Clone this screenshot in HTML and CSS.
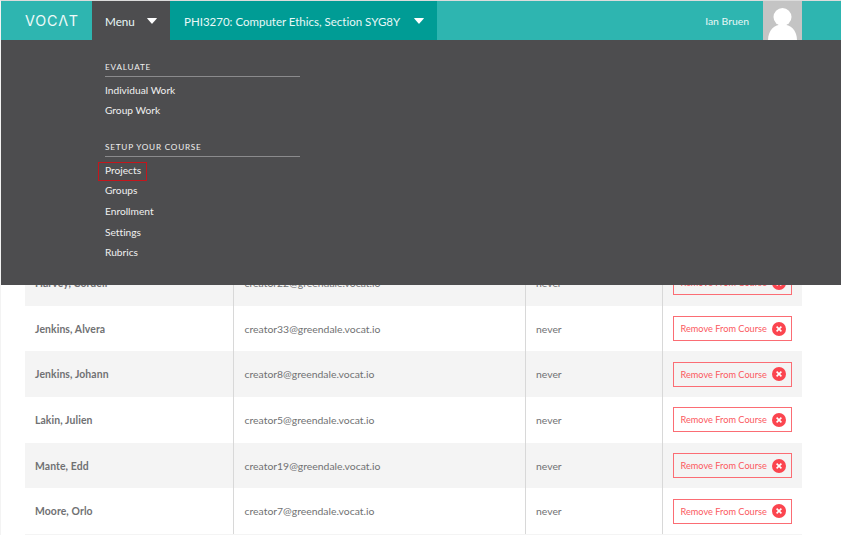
FILE: index.html
```html
<!DOCTYPE html>
<html lang="en">
<head>
<meta charset="utf-8">
<title>Vocat</title>
<link rel="stylesheet" href="styles.css">
</head>
<body>
<svg class="sprite" aria-hidden="true">
  <symbol id="remove" viewBox="0 0 14 14"><circle cx="7" cy="7" r="7" fill="#fb454f"/><path d="M4.6 4.6l4.800 4.800M9.400 4.600L4.600 9.400" stroke="#fff" stroke-width="1.6"/></symbol>
  <symbol id="caret" viewBox="0 0 10 6"><path d="M.3 0h9.4q.3 0 .1.4L5.4 5.6q-.4.4-.8 0L.2.4Q0 0 .3 0z" fill="#fff"/></symbol>
</svg>
<div class="page">
  <header class="topbar">
    <div class="logo">VOCΛT</div>
    <div class="menu-toggle"><span>Menu</span><svg class="caret"><use href="#caret"/></svg></div>
    <div class="course"><span>PHI3270: Computer Ethics, Section SYG8Y</span><svg class="caret"><use href="#caret"/></svg></div>
    <div class="user">Ian Bruen</div>
    <svg class="avatar" viewBox="0 0 39 39"><path d="M0 0h39v39H0z" fill="#c4c4c4"/><circle cx="19.5" cy="16" r="9" fill="#fff"/><path d="M5 39.5c0-10 6-16 14.500-16S34 29.500 34 39.500z" fill="#fff"/></svg>
  </header>
  <nav class="dropdown">
    <section class="group">
      <h2>EVALUATE</h2>
      <a>Individual Work</a>
      <a>Group Work</a>
    </section>
    <section class="group">
      <h2>SETUP YOUR COURSE</h2>
      <a><span class="marked">Projects</span></a>
      <a>Groups</a>
      <a>Enrollment</a>
      <a>Settings</a>
      <a>Rubrics</a>
    </section>
  </nav>
  <main class="roster">
    <div class="row"><div class="name">Harvey, Cordell</div><div class="email">creator22@greendale.vocat.io</div><div class="seen">never</div><div class="action"><div class="remove"><span>Remove From Course</span><svg><use href="#remove"/></svg></div></div></div>
    <div class="row"><div class="name">Jenkins, Alvera</div><div class="email">creator33@greendale.vocat.io</div><div class="seen">never</div><div class="action"><div class="remove"><span>Remove From Course</span><svg><use href="#remove"/></svg></div></div></div>
    <div class="row"><div class="name">Jenkins, Johann</div><div class="email">creator8@greendale.vocat.io</div><div class="seen">never</div><div class="action"><div class="remove"><span>Remove From Course</span><svg><use href="#remove"/></svg></div></div></div>
    <div class="row"><div class="name">Lakin, Julien</div><div class="email">creator5@greendale.vocat.io</div><div class="seen">never</div><div class="action"><div class="remove"><span>Remove From Course</span><svg><use href="#remove"/></svg></div></div></div>
    <div class="row"><div class="name">Mante, Edd</div><div class="email">creator19@greendale.vocat.io</div><div class="seen">never</div><div class="action"><div class="remove"><span>Remove From Course</span><svg><use href="#remove"/></svg></div></div></div>
    <div class="row"><div class="name">Moore, Orlo</div><div class="email">creator7@greendale.vocat.io</div><div class="seen">never</div><div class="action"><div class="remove"><span>Remove From Course</span><svg><use href="#remove"/></svg></div></div></div>
    <div class="row"></div>
  </main>
</div>
</body>
</html>
```
FILE: styles.css
```css
* { box-sizing: border-box; }
body {
  margin: 0;
  height: 535px;
  overflow: hidden;
  background: #fff;
  font-family: Lato, "Open Sans", sans-serif;
  font-variant-ligatures: none;
  color: #707173;
}
.sprite { position: absolute; width: 0; height: 0; }
.page {
  position: relative;
  height: 535px;
  overflow: hidden;
  border-top: 1px solid #dcdcdc;
  border-left: 1px solid #f3f3f3;
}
.topbar {
  display: flex;
  align-items: center;
  height: 39px;
  background: #2eb5b0;
  color: #e9f8f7;
}
.logo {
  width: 91px;
  padding-left: 24px;
  font: 400 14.3px/40px Inter, sans-serif;
  letter-spacing: 0.8px;
  color: #effaf9;
}
.menu-toggle, .course { display: flex; align-items: center; height: 39px; }
.menu-toggle {
  width: 78px;
  padding: 0 13px;
  justify-content: space-between;
  background: #4d4d4f;
  font-size: 11.7px;
}
.course {
  width: 267px;
  padding: 0 13px 0 14px;
  justify-content: space-between;
  background: #009c95;
  font-size: 11.5px;
}
.menu-toggle span, .course span { line-height: 15px; padding-top: 1px; }
.caret { width: 10px; height: 6px; }
.user { margin-left: auto; margin-right: 14px; font-size: 10.4px; }
.avatar { width: 39px; height: 39px; margin-right: 39px; }
.dropdown {
  position: absolute;
  z-index: 2;
  top: 39px;
  left: 0;
  right: 0;
  height: 245px;
  padding: 20px 0 0 104px;
  background: #4d4d4f;
  color: #f0f0f0;
}
.group { width: 195px; margin-bottom: 19px; }
.group h2 {
  margin: 0 0 2.6px;
  height: 17px;
  border-bottom: 1px solid #8b8b8d;
  font-size: 8.2px;
  line-height: 15px;
  font-weight: 400;
  letter-spacing: 0.78px;
}
.group a { display: block; height: 20.7px; font-size: 10.2px; line-height: 20px; }
.marked { position: relative; }
.marked::after {
  content: "";
  position: absolute;
  inset: -2px -6px -5px -7px;
  border: 1px solid #c4161c;
}
.roster { width: 777px; margin: 220px 0 0 24px; }
.row {
  display: grid;
  grid-template-columns: 209px 292px 137px 1fr;
  height: 45.7px;
  font-size: 10.4px;
}
.row:nth-child(odd) { background: #f4f4f4; }
.row > div { display: flex; align-items: center; padding-left: 10px; }
.row > div:not(:last-child) { border-right: 1px solid #d8d8d8; }
.row .email { padding-left: 10.6px; }
.row .name { font-weight: 700; letter-spacing: 0.1px; }
.remove {
  display: flex;
  align-items: center;
  justify-content: space-between;
  width: 119px;
  height: 25px;
  padding: 0 5px 0 6.5px;
  border: 1px solid #fb6d74;
  color: #fb5961;
  font-size: 9.2px;
}
.remove svg { width: 14px; height: 14px; }
```
